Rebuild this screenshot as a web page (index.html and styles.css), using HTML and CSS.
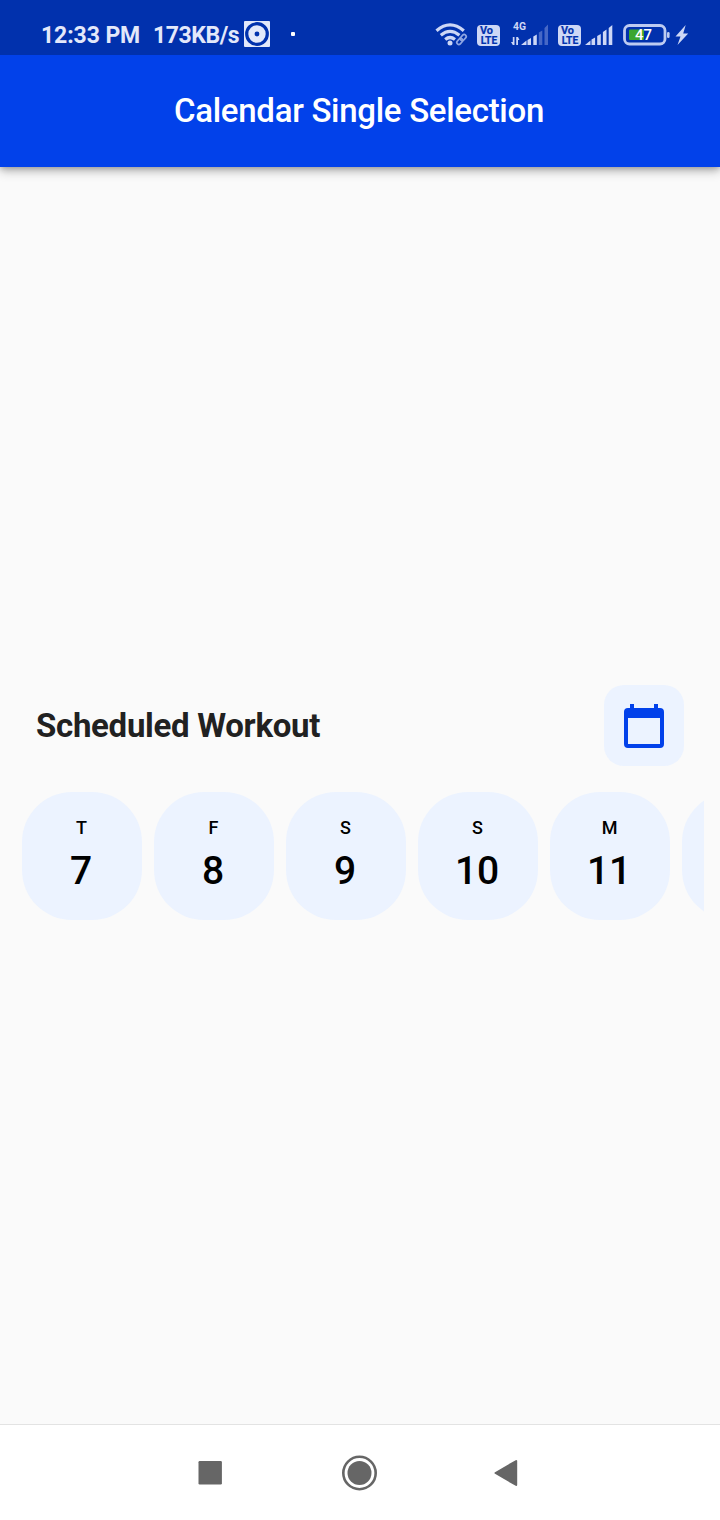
FILE: index.html
```html
<!DOCTYPE html>
<html lang="en">
<head>
<meta charset="utf-8">
<title>Calendar Single Selection</title>
<link rel="stylesheet" href="styles.css">
</head>
<body>
<div class="screen">
  <header class="top">
    <div class="status">
      <span class="status-time">12:33 PM</span>
      <span class="status-speed">173KB/s</span>
      <svg class="status-disc" width="26" height="26" viewBox="0 0 26 26">
        <rect width="26" height="26" rx="1" fill="#e3e8fa"/>
        <circle cx="13" cy="13" r="10.3" fill="none" stroke="#0131ad" stroke-width="3.2"/>
        <circle cx="13" cy="13" r="2.4" fill="#0131ad"/>
      </svg>
      <span class="status-dot"></span>
      <svg class="wifi" width="34" height="26" viewBox="0 0 34 26" fill="none" stroke="#cdd7f6" stroke-linecap="butt">
        <path d="M1.5 8.8Q15 -3 28.8 8.8" stroke-width="3.2"/>
        <path d="M5.800 13.200Q15 5.400 24.400 13.200" stroke-width="3.200"/>
        <path d="M10.200 17.500Q15 13.500 20 17.500" stroke-width="3.200"/>
        <circle cx="15" cy="20.900" r="2.500" fill="#cdd7f6" stroke="none"/>
        <g transform="rotate(-48 26.500 17.500)" stroke="#8fa6e3" stroke-width="1.700">
          <rect x="20.500" y="15.500" width="6.800" height="4" rx="2"/>
          <rect x="25.700" y="15.500" width="6.800" height="4" rx="2"/>
        </g>
      </svg>
      <svg class="volte" width="23" height="21" viewBox="0 0 23 21">
        <rect width="23" height="21" rx="4" fill="#cdd7f6"/>
        <text x="3" y="9.400" textLength="13" lengthAdjust="spacingAndGlyphs" class="volte-text">Vo</text>
        <text x="3.700" y="18.500" textLength="16.500" lengthAdjust="spacingAndGlyphs" class="volte-text">LTE</text>
      </svg>
      <svg class="signal-a" width="40" height="29" viewBox="0 -4 40 29" fill="#cdd7f6">
        <text x="3" y="8.300" textLength="13" lengthAdjust="spacingAndGlyphs" class="net-text">4G</text>
        <path d="M2.800 15h1.700v8H2.800L1 20h1.800zM6.200 15h1.800l1.500 3H8v5H6.200z"/>
        <path d="M11 23l5.500-4.500V23zM17.500 18l3.500-2v7h-3.500zM23.300 14.500l3.500-2V23h-3.500z"/>
        <path d="M28.800 10.500l3.500-2V23h-3.500zM34.500 6l3.500-3.500V23h-3.500z" fill="#4768c6"/>
      </svg>
      <svg class="volte volte-b" width="23" height="21" viewBox="0 0 23 21">
        <rect width="23" height="21" rx="4" fill="#cdd7f6"/>
        <text x="3" y="9.400" textLength="13" lengthAdjust="spacingAndGlyphs" class="volte-text">Vo</text>
        <text x="3.700" y="18.500" textLength="16.500" lengthAdjust="spacingAndGlyphs" class="volte-text">LTE</text>
      </svg>
      <svg class="signal-b" width="28" height="20" viewBox="0 0 28 20" fill="#cdd7f6">
        <path d="M0 20l5.500-4.500V20zM6.500 14.500l3.600-2V20H6.500zM12.200 11l3.600-2v11h-3.600zM17.900 7l3.600-2.500V20h-3.600zM23.700 3L27.300 0v20h-3.600z"/>
      </svg>
      <svg class="battery" width="48" height="22" viewBox="0 0 48 22">
        <rect x="1.500" y="1.500" width="40.500" height="18.500" rx="5" fill="none" stroke="#bdcbf1" stroke-width="2.800"/>
        <rect x="44" y="8" width="2.600" height="6" rx="1.200" fill="#bdcbf1"/>
        <rect x="6" y="5.500" width="15" height="10.500" rx="1" fill="#3ba62f"/>
        <text x="12" y="16" textLength="17" lengthAdjust="spacingAndGlyphs" class="battery-text">47</text>
      </svg>
      <svg class="bolt" width="14" height="20" viewBox="0 0 14 20"><path d="M10.700 0L.5 11.500h5L2.500 20 13.200 8.500H8.200z" fill="#cdd7f6"/></svg>
    </div>
    <div class="appbar"><h1 class="title">Calendar Single Selection</h1></div>
  </header>
  <main class="content">
    <div class="heading">
      <h2 class="heading-text">Scheduled Workout</h2>
      <button class="calendar-button" aria-label="Open calendar">
        <svg width="40" height="44" viewBox="0 0 40 44" fill="#0241ea">
          <path fill-rule="evenodd" d="M6 0h4v4h20V0h4v4h2a4 4 0 0 1 4 4v32a4 4 0 0 1-4 4H4a4 4 0 0 1-4-4V8a4 4 0 0 1 4-4h2zM4 14v26h32V14z"/>
        </svg>
      </button>
    </div>
    <div class="days">
      <div class="day"><span class="day-name">T</span><span class="day-number">7</span></div>
      <div class="day"><span class="day-name">F</span><span class="day-number">8</span></div>
      <div class="day"><span class="day-name">S</span><span class="day-number">9</span></div>
      <div class="day"><span class="day-name">S</span><span class="day-number">10</span></div>
      <div class="day"><span class="day-name">M</span><span class="day-number">11</span></div>
      <div class="day"></div>
    </div>
  </main>
  <nav class="navbar">
    <svg class="nav-recents" width="24" height="25"><rect x=".5" y="1" width="23.400" height="23.400" rx="1.200" fill="#666"/></svg>
    <svg class="nav-home" width="36" height="37"><circle cx="18.500" cy="19" r="16.200" fill="none" stroke="#666" stroke-width="2.600"/><circle cx="18.500" cy="19" r="12" fill="#666"/></svg>
    <svg class="nav-back" width="24" height="29"><path d="M1.500 15L22.200 3v24z" fill="#666" stroke="#666" stroke-width="2" stroke-linejoin="round"/></svg>
  </nav>
</div>
</body>
</html>
```

FILE: styles.css
```css
* { box-sizing: border-box; }
body { margin: 0; font-family: Roboto, "Liberation Sans", sans-serif; }
svg { display: block; flex: none; overflow: visible; }
.screen { width: 720px; height: 1520px; display: flex; flex-direction: column; background: #fafafa; overflow: hidden; }
.top { flex: none; background: #0241ea; box-shadow: 0 4px 10px rgba(0,0,0,.26), 0 1px 6px rgba(0,0,0,.24); }
.status { height: 55px; display: flex; align-items: flex-start; background: #0131ad; color: #e3e8fa; font-size: 23px; font-weight: 700; line-height: 28px; white-space: nowrap; }
.status-time { width: 99px; margin: 22px 0 0 41px; letter-spacing: -.1px; }
.status-speed { width: 88px; margin: 22px 0 0 13px; letter-spacing: -.45px; }
.status-disc { margin: 21px 0 0 3px; }
.status-dot { width: 4px; height: 4px; margin: 32px 0 0 21px; border-radius: 1px; background: #fff; }
.wifi { margin: 22px 0 0 140px; }
.volte { margin: 25px 0 0 8px; }
.volte-text { font: 700 10px Roboto, sans-serif; fill: #0131ad; stroke: #0131ad; stroke-width: .2px; }
.signal-a { margin: 18px 0 0 10px; }
.net-text { font: 700 10.5px Roboto, sans-serif; }
.volte-b { margin-left: 8px; }
.signal-b { margin: 25px 0 0 4px; }
.battery { margin: 24px 0 0 10px; }
.battery-text { font: 500 15px Roboto, sans-serif; fill: #fff; }
.bolt { margin: 25px 0 0 4px; }
.appbar { height: 112px; display: flex; align-items: center; justify-content: center; padding-right: 2px; }
.title { margin: 0; color: #fff; font-size: 33px; font-weight: 500; line-height: 40px; letter-spacing: -.29px; white-space: nowrap; }
.content { flex: 1; display: flex; flex-direction: column; padding: 518px 16px 0; }
.heading { display: flex; align-items: flex-start; justify-content: space-between; padding: 0 20px; height: 81px; }
.heading-text { margin: 21px 0 0; color: #212121; font-size: 33px; font-weight: 700; line-height: 40px; letter-spacing: -.3px; white-space: nowrap; }
.calendar-button { display: flex; align-items: center; justify-content: center; width: 80px; height: 81px; padding: 0; border: 0; border-radius: 20px; background: #ecf3ff; }
.days { display: flex; gap: 12px; margin-top: 26px; padding-left: 6px; overflow: hidden; }
.day { flex: none; width: 120px; height: 128px; border-radius: 50px; background: #ecf3ff; display: flex; flex-direction: column; align-items: center; padding: 24px 1px 0 0; color: #000; font-weight: 500; }
.day-name { font-size: 18px; line-height: 24px; }
.day-number { font-size: 39px; line-height: 48px; margin: 7px 1px 0 0; letter-spacing: -.2px; }
.navbar { flex: none; height: 96px; display: flex; align-items: center; padding-bottom: 1px; background: #fff; border-top: 1px solid #e3e3e3; }
.nav-recents { margin-left: 198px; }
.nav-home { margin-left: 119px; }
.nav-back { margin-left: 117px; }
```
